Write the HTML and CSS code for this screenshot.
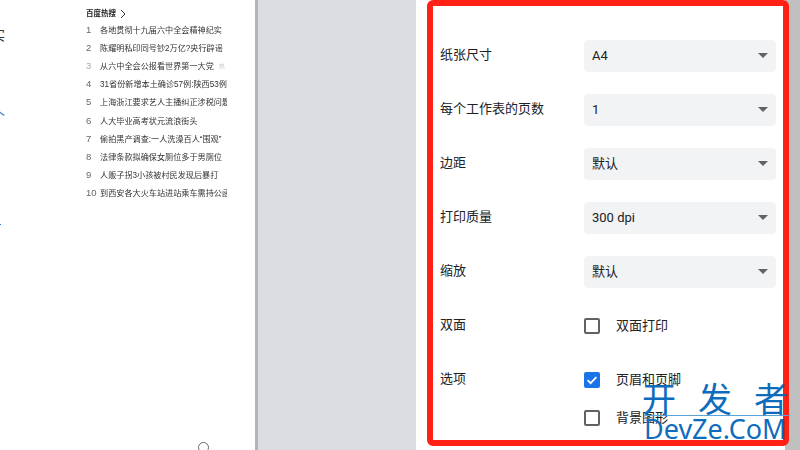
FILE: index.html
```html
<!DOCTYPE html>
<html lang="zh">
<head>
<meta charset="utf-8">
<title>打印设置</title>
<link rel="stylesheet" href="styles.css">
</head>
<body>
<div class="page">
  <section class="doc">
    <div class="clip-col">
      <span class="clip clip-1">实</span>
      <span class="clip clip-2">个</span>
      <span class="clip-dot"></span>
    </div>
    <div class="hot">
      <h2 class="hot-title">百度热搜 <svg class="chev" viewBox="0 0 8 10" width="8" height="10"><path d="M2 1l4 4-4 4" fill="none" stroke="#333" stroke-width="1"/></svg></h2>
      <ol class="hot-list">
        <li class="hot-item"><span class="num">1</span><span class="txt">各地贯彻十九届六中全会精神纪实</span></li>
        <li class="hot-item"><span class="num">2</span><span class="txt">陈耀明私印同号钞2万亿?央行辟谣</span></li>
        <li class="hot-item"><span class="num num-light">3</span><span class="txt">从六中全会公报看世界第一大党</span><span class="tag">热</span></li>
        <li class="hot-item"><span class="num">4</span><span class="txt">31省份新增本土确诊57例:陕西53例</span></li>
        <li class="hot-item"><span class="num">5</span><span class="txt">上海浙江要求艺人主播纠正涉税问题</span></li>
        <li class="hot-item"><span class="num">6</span><span class="txt">人大毕业高考状元流浪街头</span></li>
        <li class="hot-item"><span class="num">7</span><span class="txt">偷拍黑产调查:一人洗澡百人“围观”</span></li>
        <li class="hot-item"><span class="num">8</span><span class="txt">法律条款拟确保女厕位多于男厕位</span></li>
        <li class="hot-item"><span class="num">9</span><span class="txt">人贩子拐3小孩被村民发现后暴打</span></li>
        <li class="hot-item"><span class="num">10</span><span class="txt">到西安各大火车站进站乘车需持公函</span></li>
      </ol>
    </div>
    <span class="search-ring"></span>
  </section>
  <div class="gutter"></div>
  <section class="panel">
    <div class="row"><span class="label">纸张尺寸</span><div class="select">A4<span class="caret"></span></div></div>
    <div class="row"><span class="label">每个工作表的页数</span><div class="select">1<span class="caret"></span></div></div>
    <div class="row"><span class="label">边距</span><div class="select">默认<span class="caret"></span></div></div>
    <div class="row"><span class="label">打印质量</span><div class="select">300 dpi<span class="caret"></span></div></div>
    <div class="row"><span class="label">缩放</span><div class="select">默认<span class="caret"></span></div></div>
    <div class="row"><span class="label">双面</span><div class="check-line"><span class="box"></span>双面打印</div></div>
    <div class="row row-top"><span class="label">选项</span>
      <div class="checks">
        <div class="check-line"><span class="box box-on"><svg viewBox="0 0 16 16" width="16" height="16"><path d="M3.6 8.2l3 3 5.8-6" fill="none" stroke="#fff" stroke-width="1.8"/></svg></span>页眉和页脚</div>
        <div class="check-line"><span class="box"></span>背景图形</div>
      </div>
    </div>
  </section>
  <div class="side"></div>
  <div class="highlight"></div>
  <div class="wm">
    <div class="wm-cn">开发者</div>
    <div class="wm-en">DevZe.CoM</div>
  </div>
</div>
</body>
</html>
```
FILE: styles.css
```css
* { box-sizing: border-box; margin: 0; padding: 0; }
html, body { width: 800px; height: 450px; overflow: hidden; background: #fff; }
body { font-family: "Liberation Sans", "Noto Sans CJK SC", sans-serif; }
.page { position: relative; display: flex; width: 800px; height: 450px; overflow: hidden; }
.doc { position: relative; width: 255px; flex: none; background: #fff; display: flex; }
.clip-col { position: relative; width: 86px; flex: none; }
.clip { position: absolute; left: -9px; font-size: 14px; line-height: 16px; color: #333; }
.clip-1 { top: 27px; }
.clip-2 { top: 108px; color: #2a6fc0; }
.clip-dot { position: absolute; left: 0; top: 224px; width: 1px; height: 1px; background: #2a6fc0; }
.hot { width: 141px; padding-top: 8px; overflow: hidden; flex: none; filter: blur(0.3px); }
.hot-title { font-size: 7.5px; line-height: 12px; font-weight: 700; color: #222; display: flex; align-items: center; gap: 3px; }
.hot-list { list-style: none; }
.hot-item { display: flex; height: 18.2px; align-items: center; font-size: 8.15px; color: #333; white-space: nowrap; }
.num { width: 14px; flex: none; color: #666; font-size: 9.5px; }
.num-light { color: #aaa; }
.txt { flex: none; }
.tag { margin-left: 5px; font-size: 6px; color: #ccc; }
.search-ring { position: absolute; left: 198px; top: 442px; width: 11px; height: 11px; border: 1px solid #666; border-radius: 50%; }
.gutter { width: 161px; flex: none; background: #dadce0; border-left: 3px solid #b4b4b6; }
.panel { width: 369px; flex: none; background: #fff; padding: 40px 9px 0 24px; display: flex; flex-direction: column; gap: 22px; font-family: Roboto, "Noto Sans CJK SC", sans-serif; }
.row { display: flex; align-items: center; height: 32px; font-size: 13px; color: #202124; }
.row-top { align-items: flex-start; }
.label { width: 144px; flex: none; line-height: 16px; padding-bottom: 2px; }
.row-top .label { padding: 7px 0 0; }
.select { position: relative; width: 192px; height: 32px; line-height: 32px; padding-left: 8px; background: #f1f3f4; border-radius: 4px; }
.caret { position: absolute; right: 8px; top: 13px; border-left: 5px solid transparent; border-right: 5px solid transparent; border-top: 5px solid #5f6368; }
.check-line { display: flex; align-items: center; height: 32px; line-height: 16px; }
.box { width: 16px; height: 16px; border: 2px solid #5f6368; border-radius: 2px; margin-right: 16px; flex: none; }
.box-on { background: #1a73e8; border: 0; display: block; }
.box-on svg { display: block; }
.checks { display: flex; flex-direction: column; gap: 6px; }
.side { width: 15px; flex: none; background: #c0c0c0; }
.highlight { position: absolute; left: 427px; top: 0; width: 362px; height: 446px; border: 6px solid #ff2016; border-radius: 6px; pointer-events: none; }
.wm { position: absolute; left: 644px; top: 381px; width: 146px; color: #0f6cbd; font-family: "Noto Sans CJK SC", sans-serif; }
.wm-cn { font-size: 34px; line-height: 34px; letter-spacing: 22px; margin-left: -2px; white-space: nowrap; height: 34px; }
.wm-en { border-top: 1px solid #5ba3d6; font-family: "Noto Sans", sans-serif; font-size: 27px; line-height: 26px; white-space: nowrap; }
```
